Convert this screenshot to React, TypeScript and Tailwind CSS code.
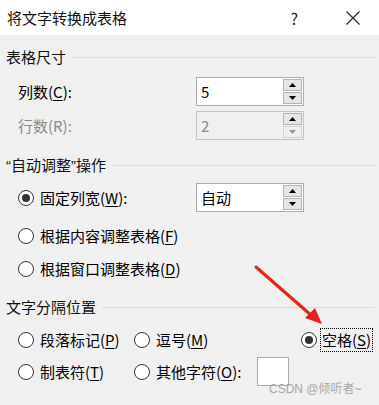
import type { ReactNode } from 'react';

const font = { fontFamily: '"Microsoft YaHei", "Noto Sans CJK SC", "Noto Sans", sans-serif' };
const latin = { fontFamily: '"Liberation Sans", sans-serif' };

function Mn({ children }: { children: ReactNode }) {
  return <span className="underline underline-offset-2 decoration-1">{children}</span>;
}

function Radio({ checked = false }: { checked?: boolean }) {
  return (
    <span className="size-4 shrink-0 rounded-full border border-[#333] bg-white flex items-center justify-center">
      {checked && <span className="size-2 rounded-full bg-[#333]" />}
    </span>
  );
}

function Section({ title, mt }: { title: ReactNode; mt: string }) {
  return (
    <div className={`flex items-center h-5 pl-[6px] pr-[4px] gap-[6px] ${mt}`}>
      <span className="text-[15px] leading-5 text-[#111]">{title}</span>
      <div className="flex-1 h-px bg-[#dadada]" />
    </div>
  );
}

function Spin({ value, disabled = false }: { value: string; disabled?: boolean }) {
  return (
    <div
      className={`w-[108px] h-[29px] border flex items-stretch p-px ${
        disabled ? 'border-[#c4c4c4] bg-[#f0f0f0]' : 'border-[#adadad] bg-white'
      }`}
    >
      <span className={`flex-1 pl-[3px] text-[15px] leading-[25px] ${disabled ? 'text-[#8a8a8a]' : 'text-black'}`}>
        {value}
      </span>
      <div className="w-[19px] flex flex-col gap-px">
        <div className="flex-1 bg-[#e6e6e6] border border-[#b4b4b4] flex items-center justify-center">
          <svg width="7" height="4" viewBox="0 0 7 4"><path d="M0 4 L3.5 0 L7 4 Z" fill="#000" /></svg>
        </div>
        <div
          className={`flex-1 border flex items-center justify-center ${
            disabled ? 'bg-[#efefef] border-[#d4d4d4]' : 'bg-[#e6e6e6] border-[#b4b4b4]'
          }`}
        >
          <svg width="7" height="4" viewBox="0 0 7 4"><path d="M0 0 L7 0 L3.5 4 Z" fill={disabled ? '#9a9a9a' : '#000'} /></svg>
        </div>
      </div>
    </div>
  );
}

export default function App() {
  return (
    <div className="relative w-[379px] h-[405px] bg-[#f0f0f0] overflow-hidden text-black" style={font}>
      {/* Title bar */}
      <div className="h-[35px] bg-white flex items-center pl-[7px]">
        <span className="text-[15px] leading-5 text-[#111]">将文字转换成表格</span>
        <span className="ml-auto mr-[48px] text-[16px] leading-5 text-[#222]">?</span>
        <svg width="14" height="14" viewBox="0 0 14 14" className="mr-[19px]">
          <path d="M0.5 0.5 L13.5 13.5 M13.5 0.5 L0.5 13.5" stroke="#222" strokeWidth="1.1" />
        </svg>
      </div>

      <Section title="表格尺寸" mt="mt-[12px]" />

      <div className="flex items-center h-[29px] mt-[10px] pl-[18px]">
        <span className="w-[178px] text-[15px] leading-5">
          列数(<Mn>C</Mn>):
        </span>
        <Spin value="5" />
      </div>
      <div className="flex items-center h-[29px] mt-[5px] pl-[18px]">
        <span className="w-[178px] text-[15px] leading-5 text-[#8a8a8a]">行数(R):</span>
        <Spin value="2" disabled />
      </div>

      <Section
        title={
          <>
            <span style={latin}>“</span>自动调整<span style={latin}>”</span>操作
          </>
        }
        mt="mt-[15px]"
      />

      <div className="flex items-center h-[29px] mt-[8px] pl-[18px]">
        <div className="w-[178px] flex items-center gap-[6px]">
          <Radio checked />
          <span className="text-[15px] leading-5">
            固定列宽(<Mn>W</Mn>):
          </span>
        </div>
        <Spin value="自动" />
      </div>
      <div className="flex items-center h-6 mt-[12px] pl-[18px] gap-[6px]">
        <Radio />
        <span className="text-[15px] leading-5">
          根据内容调整表格(<Mn>F</Mn>)
        </span>
      </div>
      <div className="flex items-center h-6 mt-[9px] pl-[18px] gap-[6px]">
        <Radio />
        <span className="text-[15px] leading-5">
          根据窗口调整表格(<Mn>D</Mn>)
        </span>
      </div>

      <Section title="文字分隔位置" mt="mt-[16px]" />

      <div className="flex items-center h-6 mt-[11px] pl-[18px]">
        <div className="w-[116px] flex items-center gap-[6px]">
          <Radio />
          <span className="text-[15px] leading-5">
            段落标记(<Mn>P</Mn>)
          </span>
        </div>
        <div className="w-[167px] flex items-center gap-[6px]">
          <Radio />
          <span className="text-[15px] leading-5">
            逗号(<Mn>M</Mn>)
          </span>
        </div>
        <div className="flex items-center gap-[3px]">
          <Radio checked />
          <span className="text-[15px] leading-[22px] px-[1px] border border-dotted border-black">
            空格(<Mn>S</Mn>)
          </span>
        </div>
      </div>
      <div className="flex items-center h-[29px] mt-[5px] pl-[18px]">
        <div className="w-[116px] flex items-center gap-[6px]">
          <Radio />
          <span className="text-[15px] leading-5">
            制表符(<Mn>T</Mn>)
          </span>
        </div>
        <div className="w-[123px] flex items-center gap-[6px]">
          <Radio />
          <span className="text-[15px] leading-5">
            其他字符(<Mn>O</Mn>):
          </span>
        </div>
        <div className="w-[32px] h-[29px] bg-white border border-[#adadad]" />
      </div>

      {/* Red annotation arrow */}
      <svg className="absolute left-0 top-0 pointer-events-none" width="379" height="405">
        <line x1="256" y1="267" x2="312" y2="316" stroke="#e8221b" strokeWidth="3" strokeLinecap="round" />
        <path d="M322 324 L305 318 L315 308 Z" fill="#e8221b" />
      </svg>

      {/* Watermark */}
      <span
        className="absolute left-[269px] top-[381px] text-[12px] leading-4 text-[#a8a8a8]"
        style={{ fontFamily: '"Liberation Sans", "Noto Sans CJK SC", sans-serif' }}
      >
        CSDN @倾听者~
      </span>
    </div>
  );
}
